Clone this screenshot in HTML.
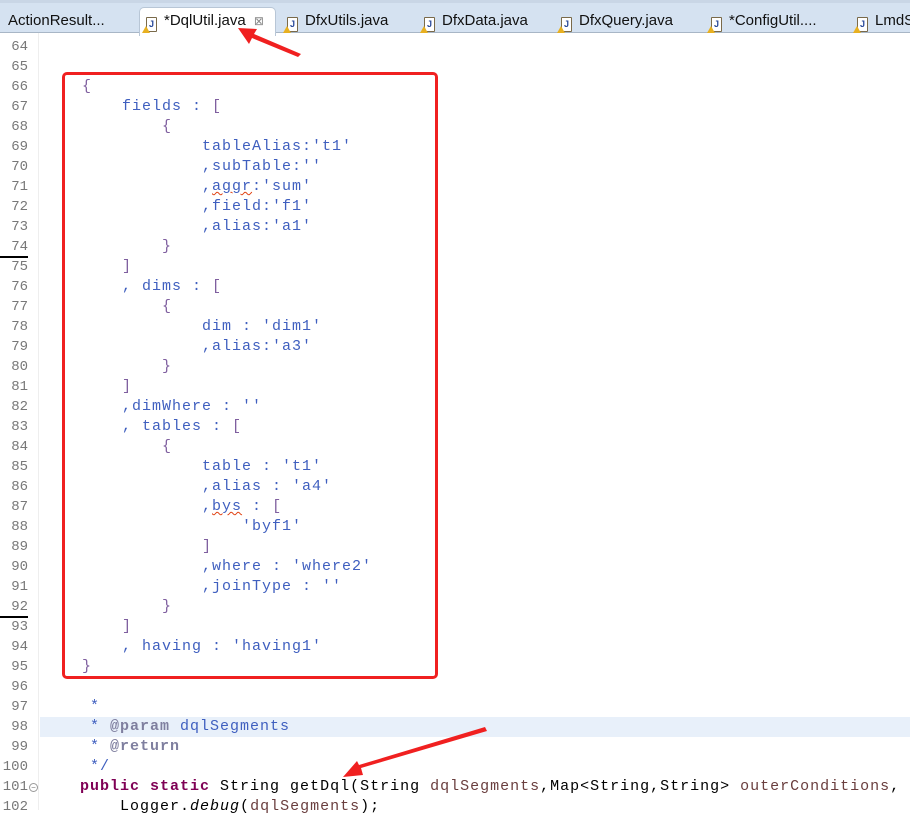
<!DOCTYPE html>
<html><head><style>
body{margin:0;width:910px;height:810px;overflow:hidden;background:#fff;position:relative;font-family:"Liberation Sans",sans-serif}
.tabs{position:absolute;left:0;top:0;width:910px;height:33px;background:#d5e2f1;border-top:3px solid #c9d6e6;box-sizing:border-box;border-bottom:1px solid #a8b6c6}
.tab{position:absolute;top:9px;font-size:15px;color:#111;white-space:nowrap}
.active{position:absolute;left:139px;top:4px;width:137px;height:29px;background:#fff;border:1px solid #b8c6d6;border-bottom:none;border-radius:5px 5px 0 0;box-sizing:border-box}
.ic{display:inline-block;width:9px;height:13px;border:1px solid #7a6a4a;border-radius:1px;background:#fff;vertical-align:-2px;margin-right:7px;position:relative;font-size:9px;line-height:12px;color:#2a4a9a;text-align:center;font-weight:bold}
.ic:after{content:"";position:absolute;left:-5px;bottom:-2px;border-left:4px solid transparent;border-right:4px solid transparent;border-bottom:7px solid #e8b020}
.gut{position:absolute;left:38px;top:33px;width:1px;height:777px;background:#eee}
.ln{position:absolute;left:0;width:28px;text-align:right;font-family:"Liberation Mono",monospace;font-size:14px;color:#787878;height:20px;line-height:20px}
.cd{position:absolute;left:42px;font-family:"Liberation Mono",monospace;font-size:15px;letter-spacing:1px;color:#3f5fbf;white-space:pre;height:20px;line-height:20px}
.b{color:#7f5f9f}
.k{color:#7f0055;font-weight:bold}
.t{color:#000}
.p{color:#7f7f9f;font-weight:bold}
.sq{text-decoration:underline wavy #e04010;text-decoration-thickness:1px}
</style></head><body>
<div class="tabs">
<div class="tab" style="left:8px">ActionResult...</div>
<div class="active"></div>
<div class="tab" style="left:146px"><span class="ic">J</span>*DqlUtil.java <span style="color:#888;font-size:12px;margin-left:4px">⊠</span></div>
<div class="tab" style="left:287px"><span class="ic">J</span>DfxUtils.java</div>
<div class="tab" style="left:424px"><span class="ic">J</span>DfxData.java</div>
<div class="tab" style="left:561px"><span class="ic">J</span>DfxQuery.java</div>
<div class="tab" style="left:711px"><span class="ic">J</span>*ConfigUtil....</div>
<div class="tab" style="left:857px"><span class="ic">J</span>LmdS</div>
</div>
<div class="gut"></div>
<div style="position:absolute;left:40px;top:717px;width:870px;height:20px;background:#e8f0fa"></div>
<div style="position:absolute;left:0;top:256px;width:28px;height:2px;background:#000"></div>
<div style="position:absolute;left:0;top:616px;width:28px;height:2px;background:#000"></div>

<div class="ln" style="top:37px">64</div><div class="ln" style="top:57px">65</div><div class="ln" style="top:77px">66</div><div class="ln" style="top:97px">67</div><div class="ln" style="top:117px">68</div><div class="ln" style="top:137px">69</div><div class="ln" style="top:157px">70</div><div class="ln" style="top:177px">71</div><div class="ln" style="top:197px">72</div><div class="ln" style="top:217px">73</div><div class="ln" style="top:237px">74</div><div class="ln" style="top:257px">75</div><div class="ln" style="top:277px">76</div><div class="ln" style="top:297px">77</div><div class="ln" style="top:317px">78</div><div class="ln" style="top:337px">79</div><div class="ln" style="top:357px">80</div><div class="ln" style="top:377px">81</div><div class="ln" style="top:397px">82</div><div class="ln" style="top:417px">83</div><div class="ln" style="top:437px">84</div><div class="ln" style="top:457px">85</div><div class="ln" style="top:477px">86</div><div class="ln" style="top:497px">87</div><div class="ln" style="top:517px">88</div><div class="ln" style="top:537px">89</div><div class="ln" style="top:557px">90</div><div class="ln" style="top:577px">91</div><div class="ln" style="top:597px">92</div><div class="ln" style="top:617px">93</div><div class="ln" style="top:637px">94</div><div class="ln" style="top:657px">95</div><div class="ln" style="top:677px">96</div><div class="ln" style="top:697px">97</div><div class="ln" style="top:717px">98</div><div class="ln" style="top:737px">99</div><div class="ln" style="top:757px">100</div><div class="ln" style="top:777px">101</div><div class="ln" style="top:797px">102</div>
<div style="position:absolute;left:29px;top:783px;width:7px;height:7px;border:1px solid #999;border-radius:50%;font-size:8px;line-height:7px;text-align:center;color:#777">−</div>

<div class="cd" style="top:77px">    <span class="b">{</span></div>
<div class="cd" style="top:97px">        fields : <span class="b">[</span></div>
<div class="cd" style="top:117px">            <span class="b">{</span></div>
<div class="cd" style="top:137px">                tableAlias:'t1'</div>
<div class="cd" style="top:157px">                ,subTable:''</div>
<div class="cd" style="top:177px">                ,<span class="sq">aggr</span>:'sum'</div>
<div class="cd" style="top:197px">                ,field:'f1'</div>
<div class="cd" style="top:217px">                ,alias:'a1'</div>
<div class="cd" style="top:237px">            <span class="b">}</span></div>
<div class="cd" style="top:257px">        <span class="b">]</span></div>
<div class="cd" style="top:277px">        , dims : <span class="b">[</span></div>
<div class="cd" style="top:297px">            <span class="b">{</span></div>
<div class="cd" style="top:317px">                dim : 'dim1'</div>
<div class="cd" style="top:337px">                ,alias:'a3'</div>
<div class="cd" style="top:357px">            <span class="b">}</span></div>
<div class="cd" style="top:377px">        <span class="b">]</span></div>
<div class="cd" style="top:397px">        ,dimWhere : ''</div>
<div class="cd" style="top:417px">        , tables : <span class="b">[</span></div>
<div class="cd" style="top:437px">            <span class="b">{</span></div>
<div class="cd" style="top:457px">                table : 't1'</div>
<div class="cd" style="top:477px">                ,alias : 'a4'</div>
<div class="cd" style="top:497px">                ,<span class="sq">bys</span> : <span class="b">[</span></div>
<div class="cd" style="top:517px">                    'byf1'</div>
<div class="cd" style="top:537px">                <span class="b">]</span></div>
<div class="cd" style="top:557px">                ,where : 'where2'</div>
<div class="cd" style="top:577px">                ,joinType : ''</div>
<div class="cd" style="top:597px">            <span class="b">}</span></div>
<div class="cd" style="top:617px">        <span class="b">]</span></div>
<div class="cd" style="top:637px">        , having : 'having1'</div>
<div class="cd" style="top:657px">    <span class="b">}</span></div>
<div class="cd" style="top:697px;left:40px">     *</div>
<div class="cd" style="top:717px;left:40px">     * <span class="p">@param</span> dqlSegments</div>
<div class="cd" style="top:737px;left:40px">     * <span class="p">@return</span></div>
<div class="cd" style="top:757px;left:40px">     */</div>
<div class="cd t" style="top:777px;left:80px"><span class="k">public</span> <span class="k">static</span> String getDql(String <span style="color:#6a3e3e">dqlSegments</span>,Map&lt;String,String&gt; <span style="color:#6a3e3e">outerConditions</span>, </div>
<div class="cd t" style="top:797px;left:80px">    Logger.<i>debug</i>(<span style="color:#6a3e3e">dqlSegments</span>);</div>

<div style="position:absolute;left:62px;top:72px;width:376px;height:607px;border:3px solid #f02020;border-radius:5px;box-sizing:border-box"></div>
<svg style="position:absolute;left:0;top:0" width="910" height="810">
<polygon points="301,54 298,57 252,38 249,44 238,28 257,29 254,34" fill="#f02020"/>
<polygon points="485,727 487,731 361,768 363,775 343,777 357,761 359,765" fill="#f02020"/>
</svg>
</body></html>
